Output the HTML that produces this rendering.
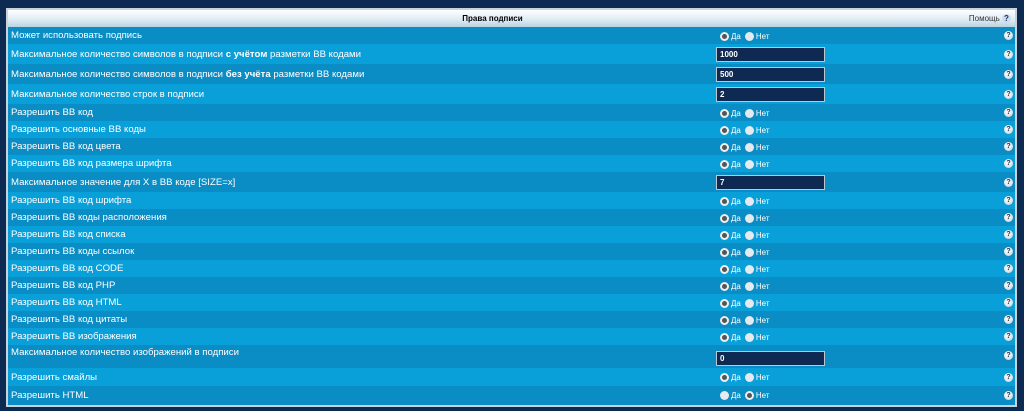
<!DOCTYPE html><html><head><meta charset="utf-8"><style>
body{margin:0;background:#0d2b52;width:1024px;height:411px;overflow:hidden;font-family:"Liberation Sans",Arial,sans-serif;font-size:9.6px;color:#fff}
.box{position:absolute;left:6px;top:8px;width:1007px;height:395px;border:2px solid #c8d4dc;background:#0a8dc6}
.hd{height:17px;background:linear-gradient(#fff,#dceaf2 60%,#b9d2e2);color:#000;font-weight:bold;text-align:center;line-height:17px;font-size:8px;position:relative;padding-right:38px}
.hd span{position:absolute;right:4px;top:0;font-weight:normal;color:#333;font-size:8px}
.r{position:relative;display:flex;align-items:center;padding-left:3px}
.a{background:#0a8cc4}.b{background:#09a0da}
.q{position:absolute;left:996px;width:9px;height:9px;border-radius:50%;background:radial-gradient(circle at 40% 35%,#fff,#c8d0d8);color:#234;font-size:7px;font-weight:bold;text-align:center;line-height:9px}
.rad{position:absolute;left:712px;display:flex;align-items:center;font-size:8px;top:50%;margin-top:-4px}
.c{width:9px;height:9px;border-radius:50%;background:#e4eaee;display:inline-block;margin-right:2px;box-sizing:border-box}
.c.on{border:2px solid #eee;background:#555}
.g{display:inline-block;width:4px}
.in{position:absolute;left:708px;width:109px;height:15px;background:#0f2a52;border:1px solid #bcc8d0;box-sizing:border-box;font-size:8px;font-weight:bold;line-height:13px;padding-left:3px}
</style></head><body><div class="box">
<div class="hd">Права подписи<span>Помощь <b style="display:inline-block;width:9px;height:9px;border-radius:50%;background:#cde;color:#235;line-height:9px">?</b></span></div>
<div class="r a" style="height:17px">Может использовать подпись<div class="rad"><i class="c on"></i>Да<i class="g"></i><i class="c"></i>Нет</div><div class="q">?</div></div>
<div class="r b" style="height:20px">Максимальное количество символов в подписи&nbsp;<b>с учётом</b>&nbsp;разметки BB кодами<div class="in">1000</div><div class="q">?</div></div>
<div class="r a" style="height:20px">Максимальное количество символов в подписи&nbsp;<b>без учёта</b>&nbsp;разметки BB кодами<div class="in">500</div><div class="q">?</div></div>
<div class="r b" style="height:20px">Максимальное количество строк в подписи<div class="in">2</div><div class="q">?</div></div>
<div class="r a" style="height:17px">Разрешить BB код<div class="rad"><i class="c on"></i>Да<i class="g"></i><i class="c"></i>Нет</div><div class="q">?</div></div>
<div class="r b" style="height:17px">Разрешить основные BB коды<div class="rad"><i class="c on"></i>Да<i class="g"></i><i class="c"></i>Нет</div><div class="q">?</div></div>
<div class="r a" style="height:17px">Разрешить BB код цвета<div class="rad"><i class="c on"></i>Да<i class="g"></i><i class="c"></i>Нет</div><div class="q">?</div></div>
<div class="r b" style="height:17px">Разрешить BB код размера шрифта<div class="rad"><i class="c on"></i>Да<i class="g"></i><i class="c"></i>Нет</div><div class="q">?</div></div>
<div class="r a" style="height:20px">Максимальное значение для X в BB коде [SIZE=x]<div class="in">7</div><div class="q">?</div></div>
<div class="r b" style="height:17px">Разрешить BB код шрифта<div class="rad"><i class="c on"></i>Да<i class="g"></i><i class="c"></i>Нет</div><div class="q">?</div></div>
<div class="r a" style="height:17px">Разрешить BB коды расположения<div class="rad"><i class="c on"></i>Да<i class="g"></i><i class="c"></i>Нет</div><div class="q">?</div></div>
<div class="r b" style="height:17px">Разрешить BB код списка<div class="rad"><i class="c on"></i>Да<i class="g"></i><i class="c"></i>Нет</div><div class="q">?</div></div>
<div class="r a" style="height:17px">Разрешить BB коды ссылок<div class="rad"><i class="c on"></i>Да<i class="g"></i><i class="c"></i>Нет</div><div class="q">?</div></div>
<div class="r b" style="height:17px">Разрешить BB код CODE<div class="rad"><i class="c on"></i>Да<i class="g"></i><i class="c"></i>Нет</div><div class="q">?</div></div>
<div class="r a" style="height:17px">Разрешить BB код PHP<div class="rad"><i class="c on"></i>Да<i class="g"></i><i class="c"></i>Нет</div><div class="q">?</div></div>
<div class="r b" style="height:17px">Разрешить BB код HTML<div class="rad"><i class="c on"></i>Да<i class="g"></i><i class="c"></i>Нет</div><div class="q">?</div></div>
<div class="r a" style="height:17px">Разрешить BB код цитаты<div class="rad"><i class="c on"></i>Да<i class="g"></i><i class="c"></i>Нет</div><div class="q">?</div></div>
<div class="r b" style="height:17px">Разрешить BB изображения<div class="rad"><i class="c on"></i>Да<i class="g"></i><i class="c"></i>Нет</div><div class="q">?</div></div>
<div class="r a" style="height:23px;align-items:flex-start;padding-top:2px;box-sizing:border-box">Максимальное количество изображений в подписи<div class="in" style="top:6px">0</div><div class="q" style="top:6px">?</div></div>
<div class="r b" style="height:18px">Разрешить смайлы<div class="rad"><i class="c on"></i>Да<i class="g"></i><i class="c"></i>Нет</div><div class="q">?</div></div>
<div class="r a" style="height:18px">Разрешить HTML<div class="rad"><i class="c"></i>Да<i class="g"></i><i class="c on"></i>Нет</div><div class="q">?</div></div>
</div></body></html>
